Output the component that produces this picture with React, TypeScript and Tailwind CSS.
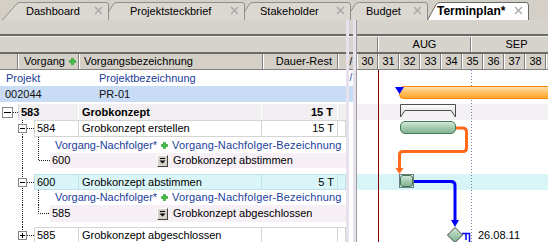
import React from "react";

const dot = { stroke: "#1a1a1a", strokeDasharray: "1 1", strokeWidth: 1, fill: "none" } as const;

function XIcon() {
  return (
    <svg width="9" height="9" viewBox="0 0 9 9" className="shrink-0">
      <path d="M1 1L8 8M8 1L1 8" stroke="#a6a6a6" strokeWidth="1.3" />
    </svg>
  );
}

function TabShape({ w, s, active }: { w: number; s: number; active?: boolean }) {
  const h = 19;
  const outline = `M0.5,${h} L${s - 3},3.6 Q${s - 1.5},1.5 ${s + 1.5},1.5 L${w - 3},1.5 Q${w - 0.5},1.5 ${w - 0.5},4 L${w - 0.5},${h}`;
  return (
    <svg className="absolute inset-0" width={w} height={h} viewBox={`0 0 ${w} ${h}`}>
      <path d={outline + " Z"} fill={active ? "#ffffff" : "#dbd7d1"} />
      <path d={outline} fill="none" stroke={active ? "#6a6a6a" : "#8e8e8e"} />
    </svg>
  );
}

function TabStrip() {
  return (
    <div className="flex h-[20px] items-end bg-[#d4d0c8]">
      <div className="relative z-40 ml-[2px] flex h-[19px] w-[107px] shrink-0 items-center">
        <TabShape w={107} s={17} />
        <span className="relative ml-[24px] pt-[1px]">Dashboard</span>
        <span className="relative ml-auto mr-[6px]"><XIcon /></span>
      </div>
      <div className="relative z-30 ml-[-6px] flex h-[19px] w-[142px] shrink-0 items-center">
        <TabShape w={142} s={13} />
        <span className="relative ml-[27px] pt-[1px]">Projektsteckbrief</span>
        <span className="relative ml-auto mr-[6px]"><XIcon /></span>
      </div>
      <div className="relative z-20 ml-[-6px] flex h-[19px] w-[112px] shrink-0 items-center">
        <TabShape w={112} s={13} />
        <span className="relative ml-[21px] pt-[1px]">Stakeholder</span>
        <span className="relative ml-auto mr-[6px]"><XIcon /></span>
      </div>
      <div className="relative z-10 ml-[-6px] flex h-[19px] w-[83px] shrink-0 items-center">
        <TabShape w={83} s={13} />
        <span className="relative ml-[21px] pt-[1px]">Budget</span>
        <span className="relative ml-auto mr-[6px]"><XIcon /></span>
      </div>
      <div className="relative z-50 ml-[-1px] flex h-[19px] w-[102px] shrink-0 items-center">
        <TabShape w={102} s={12} active />
        <span className="relative ml-[10px] pt-[1px] text-[12px] font-bold">Terminplan*</span>
        <span className="relative ml-auto mr-[6px]"><XIcon /></span>
      </div>
    </div>
  );
}

function Plus() {
  return (
    <svg width="7" height="7" viewBox="0 0 7 7" className="shrink-0">
      <path d="M2.5 0.5h2v2h2v2h-2v2h-2v-2h-2v-2h2z" fill="#49c24a" stroke="#1f9a22" strokeWidth="0.7" />
    </svg>
  );
}

function Box({ x, y, plus, size = 9 }: { x: number; y: number; plus?: boolean; size?: number }) {
  const c = size / 2;
  return (
    <g>
      <rect x={x + 0.5} y={y + 0.5} width={size - 1} height={size - 1} fill="#fff" stroke="#868686" />
      <path d={`M${x + 2} ${y + c}H${x + size - 2}`} stroke="#000" />
      {plus && <path d={`M${x + c} ${y + 2}V${y + size - 2}`} stroke="#000" />}
    </g>
  );
}

function Gutter({ w, h, children }: { w: number; h: number; children?: React.ReactNode }) {
  return (
    <svg width={w} height={h} viewBox={`0 0 ${w} ${h}`} className="shrink-0">
      {children}
    </svg>
  );
}

function DropBtn() {
  return (
    <div className="flex h-[12px] w-[11px] shrink-0 flex-col items-center justify-center gap-[1px] border border-t-white border-l-white border-r-[#404040] border-b-[#404040] bg-[#d4d0c8]">
      <div className="h-[1px] w-[5px] bg-[#000]" />
      <svg width="7" height="4" viewBox="0 0 7 4">
        <path d="M0.5 0.5H6.5L3.5 3.5Z" fill="#000" />
      </svg>
    </div>
  );
}

function VNRow({ h }: { h: number }) {
  return (
    <div className="flex bg-white" style={{ height: h }}>
      <Gutter w={50} h={h}>
        <path d={`M22.5 0V${h}`} {...dot} />
        <path d={`M38.5 0V${h}`} {...dot} />
      </Gutter>
      <span className="ml-[5px] flex w-[106px] shrink-0 items-center text-[#1b3d9c]">Vorgang-Nachfolger*</span>
      <span className="flex items-center"><Plus /></span>
      <span className="ml-[4px] flex items-center tracking-[0.15px] text-[#1b3d9c]">Vorgang-Nachfolger-Bezeichnung</span>
    </div>
  );
}

function SubRow({ h, id, text, cy }: { h: number; id: string; text: string; cy: number }) {
  return (
    <div className="flex bg-white" style={{ height: h }}>
      <Gutter w={50} h={h}>
        <path d={`M22.5 0V${h}`} {...dot} />
        <path d={`M38.5 0V${cy}H50`} {...dot} />
      </Gutter>
      <div className="flex flex-1 items-center bg-[#f6eff6]">
        <span className="w-[107px] shrink-0 pl-[2px]">{id}</span>
        <DropBtn />
        <span className="ml-[5px]">{text}</span>
      </div>
    </div>
  );
}

function TaskRow({
  h,
  id,
  name,
  dur,
  plus,
  vTop,
  vBottom,
  bg,
  bd,
}: {
  h: number;
  id: string;
  name: string;
  dur?: string;
  plus?: boolean;
  vTop?: boolean;
  vBottom?: boolean;
  bg: string;
  bd: string;
}) {
  return (
    <div className="flex bg-white" style={{ height: h }}>
      <Gutter w={34} h={h}>
        {vTop && <path d={`M22.5 0V5`} {...dot} />}
        {vBottom && <path d={`M22.5 12V${h}`} {...dot} />}
        <Box x={18} y={4} plus={plus} />
        <path d="M27 8.5H34" {...dot} />
      </Gutter>
      <div className={`flex flex-1 border ${bg} ${bd}`}>
        <div className={`flex w-[44px] shrink-0 items-center border-r pl-[2px] ${bd}`}>{id}</div>
        <div className={`flex w-[183px] shrink-0 items-center border-r pl-[3px] ${bd}`}>{name}</div>
        <div className={`flex w-[76px] shrink-0 items-center justify-end border-r pr-[3px] ${bd}`}>{dur}</div>
        <div className="flex-1" />
      </div>
    </div>
  );
}

function LeftPane() {
  return (
    <div className="flex w-[346px] shrink-0 flex-col">
      <div className="h-[16px] shrink-0 border-b-2 border-[#6b6b6b] bg-[#d6d2cc]" />
      <div className="h-[18px] shrink-0 border-t border-b-2 border-t-[#eeebe7] border-b-[#6b6b6b] bg-[#d6d2cc]" />
      <div className="flex h-[16px] shrink-0 border-b border-[#808080] bg-[#d4d0c8]">
        <div className="w-[18px] shrink-0 border-r border-[#808080]" />
        <div className="flex w-[61px] shrink-0 items-center border-l border-r border-l-white border-r-[#808080] pl-[5px]">
          <span>Vorgang</span>
          <span className="ml-[4px] flex"><Plus /></span>
        </div>
        <div className="flex w-[184px] shrink-0 items-center border-l border-r border-l-white border-r-[#808080] pl-[4px]">
          Vorgangsbezeichnung
        </div>
        <div className="flex w-[75px] shrink-0 items-center justify-end border-l border-r border-l-white border-r-[#808080] pr-[5px]">
          Dauer-Rest
        </div>
        <div className="flex-1 border-l border-white" />
      </div>
      <div className="flex h-[16px] shrink-0 items-center bg-white text-[#1b3d9c]">
        <span className="w-[99px] shrink-0 pl-[6px]">Projekt</span>
        <span>Projektbezeichnung</span>
      </div>
      <div className="flex h-[16px] shrink-0 items-center bg-[#c9dcf6] text-[#111]">
        <span className="w-[99px] shrink-0 pl-[5px]">002044</span>
        <span>PR-01</span>
      </div>
      <div className="h-[2px] shrink-0 bg-white" />
      <div className="flex h-[16px] shrink-0 bg-white">
        <Gutter w={18} h={16}>
          <Box x={2} y={3} size={11} />
          <path d="M13 8.5H18" {...dot} />
        </Gutter>
        <div className="flex flex-1 border-l border-[#d8d6d8] bg-[#f1eff1] font-bold">
          <div className="flex w-[60px] shrink-0 items-center border-r border-white pl-[2px]">583</div>
          <div className="flex w-[183px] shrink-0 items-center border-r border-white pl-[3px]">Grobkonzept</div>
          <div className="flex w-[76px] shrink-0 items-center justify-end border-r border-white pr-[4px]">15 T</div>
          <div className="flex-1" />
        </div>
      </div>
      <TaskRow h={17} id="584" name="Grobkonzept erstellen" dur="15 T" vTop vBottom bg="bg-white" bd="border-[#d4d4d4]" />
      <VNRow h={16} />
      <SubRow h={15} id="600" text="Grobkonzept abstimmen" cy={7.5} />
      <div className="h-[6px] shrink-0 bg-white">
        <Gutter w={34} h={6}>
          <path d="M22.5 0V6" {...dot} />
        </Gutter>
      </div>
      <TaskRow h={16} id="600" name="Grobkonzept abstimmen" dur="5 T" vTop vBottom bg="bg-[#d9f5f8]" bd="border-[#bfe2e6]" />
      <VNRow h={15} />
      <SubRow h={17} id="585" text="Grobkonzept abgeschlossen" cy={8.5} />
      <div className="h-[5px] shrink-0 bg-white">
        <Gutter w={34} h={5}>
          <path d="M22.5 0V5" {...dot} />
        </Gutter>
      </div>
      <TaskRow h={16} id="585" name="Grobkonzept abgeschlossen" plus vTop bg="bg-white" bd="border-[#d4d4d4]" />
    </div>
  );
}

function Splitter() {
  return (
    <div className="flex w-[11px] shrink-0">
      <div className="w-[3px] shrink-0 bg-[#e6e1ec]" />
      <div className="flex w-[4px] shrink-0 flex-col">
        <div className="h-[16px] shrink-0 border-b-2 border-[#6b6b6b] bg-[#d6d2cc]" />
        <div className="h-[18px] shrink-0 border-t border-b-2 border-t-[#eeebe7] border-b-[#6b6b6b] bg-[#d6d2cc]" />
        <div className="flex h-[16px] shrink-0 items-center justify-center border-b border-[#808080] bg-[#d4d0c8] text-[10px]">/</div>
        <div className="flex h-[16px] shrink-0 items-center justify-center bg-white text-[10px] text-[#1b3d9c]">/</div>
        <div className="h-[16px] shrink-0 bg-[#c9dcf6]" />
        <div className="flex-1 bg-white" />
      </div>
      <div className="w-[3px] shrink-0 bg-[#e6e1ec]" />
      <div className="w-[1px] shrink-0 bg-[#9c9c9c]" />
    </div>
  );
}

const weeks = ["30", "31", "32", "33", "34", "35", "36", "37", "38", ""];

function GanttDrawing() {
  return (
    <svg className="absolute inset-0" width="191" height="172" viewBox="0 0 191 172">
      <defs>
        <linearGradient id="og" x1="0" y1="0" x2="0" y2="1">
          <stop offset="0" stopColor="#ffe2b4" />
          <stop offset="0.45" stopColor="#ffc265" />
          <stop offset="1" stopColor="#ffa22c" />
        </linearGradient>
        <linearGradient id="gg" x1="0" y1="0" x2="0" y2="1">
          <stop offset="0" stopColor="#d8ecde" />
          <stop offset="0.5" stopColor="#a5cbb0" />
          <stop offset="1" stopColor="#80b090" />
        </linearGradient>
        <linearGradient id="wg" x1="0" y1="0" x2="0" y2="1">
          <stop offset="0" stopColor="#ffffff" />
          <stop offset="1" stopColor="#d2d2d2" />
        </linearGradient>
      </defs>
      <line x1="21.5" y1="0" x2="21.5" y2="172" stroke="#8a0000" />
      <line x1="114.5" y1="0" x2="114.5" y2="172" stroke="#7c7c9c" strokeDasharray="1 2" />
      <rect x="42.5" y="16.5" width="170" height="12" rx="4" fill="url(#og)" stroke="#ff8a00" />
      <path d="M38 17H47L42.5 24Z" fill="#0000ff" />
      <path d="M43.5 34.5H98.5V47L94 40.5H48L43.5 47Z" fill="url(#wg)" stroke="#4e4e4e" />
      <rect x="43.5" y="51.5" width="55" height="12" rx="4.5" fill="url(#gg)" stroke="#467a56" />
      <path d="M99 58H105.5Q109.5 58 109.5 62V78Q109.5 81.5 106 81.5H46Q42.5 81.5 42.5 85V99" fill="none" stroke="#ff6a1a" strokeWidth="3" />
      <path d="M38.5 98H46.5L42.5 104Z" fill="#ff6a1a" />
      <rect x="42.5" y="104.5" width="14" height="13" fill="none" stroke="#000" strokeDasharray="1 1" />
      <rect x="43.5" y="105.5" width="12" height="11" rx="2.5" fill="url(#gg)" stroke="#467a56" />
      <path d="M57 111.5H94Q98 111.5 98 115.5V151" fill="none" stroke="#0000ff" strokeWidth="3" />
      <path d="M94 150H102L98 157Z" fill="#0000ff" />
      <path d="M98 157.5L105.5 165L98 172.5L90.5 165Z" fill="url(#gg)" stroke="#3c3c3c" />
      <path d="M105 163.5H112.5V172M109 163.5V170" fill="none" stroke="#0000ff" strokeWidth="1.5" />
      <text x="121" y="169" fontSize="11" fontFamily="Liberation Sans, Arial, sans-serif" fill="#000">26.08.11</text>
    </svg>
  );
}

function Gantt() {
  return (
    <div className="flex w-[191px] shrink-0 flex-col overflow-hidden">
      <div className="h-[16px] shrink-0 border-b-2 border-[#6b6b6b] bg-[#d6d2cc]" />
      <div className="flex h-[18px] shrink-0 border-t border-b-2 border-t-[#eeebe7] border-b-[#6b6b6b] bg-[#d6d2cc]">
        <div className="w-[21px] shrink-0 border-r border-[#808080]" />
        <div className="flex w-[93px] shrink-0 items-center justify-center border-l border-r border-l-white border-r-[#808080]">AUG</div>
        <div className="flex w-[90px] shrink-0 items-center justify-center border-l border-white">SEP</div>
      </div>
      <div className="flex h-[16px] shrink-0 border-b border-[#808080] bg-[#d4d0c8]">
        {weeks.map((w, i) => (
          <div key={i} className="flex w-[21px] shrink-0 items-center justify-center border-l border-r border-l-white border-r-[#808080]">
            {w}
          </div>
        ))}
      </div>
      <div className="relative flex flex-1 flex-col bg-white">
        <div className="h-[34px] shrink-0" />
        <div className="h-[16px] shrink-0 bg-[#f4f1f4]" />
        <div className="h-[54px] shrink-0" />
        <div className="h-[16px] shrink-0 bg-[#d7f5f7]" />
        <div className="flex-1" />
        <GanttDrawing />
      </div>
    </div>
  );
}

export default function App() {
  return (
    <div className="h-[242px] w-[548px] overflow-hidden bg-[#d4d0c8] font-['Liberation_Sans',Arial,sans-serif] text-[11px] leading-none text-black">
      <TabStrip />
      <div className="flex h-[222px]">
        <LeftPane />
        <Splitter />
        <Gantt />
      </div>
    </div>
  );
}
